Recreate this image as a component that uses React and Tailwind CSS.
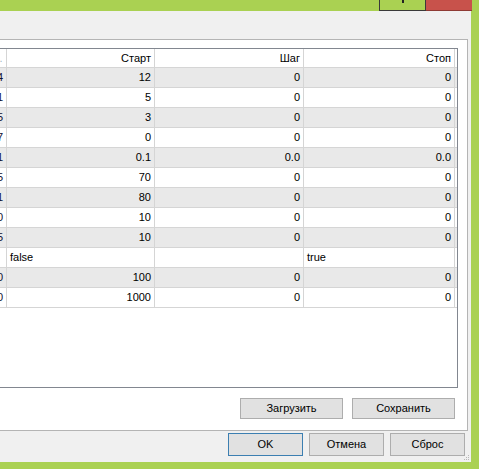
import React from "react";

// rows of the parameter grid; first column is scrolled off to the left
const ROWS = [
  ["4", "12", "0", "0"],
  ["1", "5", "0", "0"],
  ["5", "3", "0", "0"],
  ["7", "0", "0", "0"],
  ["1", "0.1", "0.0", "0.0"],
  ["5", "70", "0", "0"],
  ["1", "80", "0", "0"],
  ["0", "10", "0", "0"],
  ["5", "10", "0", "0"],
  ["", "false", "", "true"],
  ["0", "100", "0", "0"],
  ["0", "1000", "0", "0"],
];

const COLS = ["w-[17px]", "w-[148px]", "w-[149px]", "w-[151px]"];

function Cell({ w, left, children }) {
  return (
    <div
      className={`${w} h-full shrink-0 flex items-center border-r border-[#d5d5d5] ${
        left ? "justify-start pl-[3px]" : "justify-end pr-[3px]"
      }`}
    >
      {children}
    </div>
  );
}

function Btn({ w, h, def, children }) {
  return (
    <button
      className={`${w} ${h} bg-[#e1e1e1] border ${
        def ? "border-[#3c7fb1]" : "border-[#adadad]"
      } text-black flex items-center justify-center`}
    >
      {children}
    </button>
  );
}

export default function App() {
  return (
    <div
      className="w-[479px] h-[469px] bg-[#aad152] flex flex-col overflow-hidden text-[11px] text-black"
      style={{ fontFamily: '"Liberation Sans", Arial, sans-serif' }}
    >
      {/* title bar */}
      <div className="h-[11px] shrink-0 flex justify-end pr-[7px]">
        <div className="w-[47px] h-[11px] border border-t-0 border-[#3a3a3a] bg-[#aad152] flex justify-center">
          <div className="w-[2px] h-[3px] bg-[#222]" />
        </div>
        <div className="w-[46px] h-[11px] bg-[#c8524b] border-b border-[#8e3a34]" />
      </div>

      <div className="flex flex-1">
        <div className="relative w-[471px] h-[451px] bg-[#f0f0f0] flex flex-col">
          {/* tab page */}
          <div className="mt-[28px] -ml-[20px] mr-[3px] border border-[#b4b4b4] bg-white pt-[8px] pr-[9px] pl-[8px] pb-[11px] flex flex-col">
            <div className="h-[340px] border border-[#828790] bg-white flex flex-col">
              <div className="h-[19px] flex border-b border-[#d5d5d5] bg-white">
                <Cell w={COLS[0]}>
                  <span className="text-[#9fb7c4]">…</span>
                </Cell>
                <Cell w={COLS[1]}>Старт</Cell>
                <Cell w={COLS[2]}>Шаг</Cell>
                <Cell w={COLS[3]}>Стоп</Cell>
              </div>
              {ROWS.map((r, i) => {
                const isText = r[1] === "false";
                return (
                  <div
                    key={i}
                    className={`h-[20px] flex border-b border-[#d5d5d5] ${
                      i % 2 === 0 ? "bg-[#e9e9e9]" : "bg-white"
                    }`}
                  >
                    <Cell w={COLS[0]}>
                      <span className="text-[#101030]">{r[0]}</span>
                    </Cell>
                    <Cell w={COLS[1]} left={isText}>{r[1]}</Cell>
                    <Cell w={COLS[2]} left={isText}>{r[2]}</Cell>
                    <Cell w={COLS[3]} left={isText}>{r[3]}</Cell>
                  </div>
                );
              })}
            </div>
            <div className="mt-[10px] flex justify-end gap-[9px] pr-[3px]">
              <Btn w="w-[103px]" h="h-[21px]">Загрузить</Btn>
              <Btn w="w-[103px]" h="h-[21px]">Сохранить</Btn>
            </div>
          </div>

          <div className="mt-[2px] flex justify-end gap-[6px] pr-[6px]">
            <Btn w="w-[75px]" h="h-[23px]" def>OK</Btn>
            <Btn w="w-[75px]" h="h-[23px]">Отмена</Btn>
            <Btn w="w-[75px]" h="h-[23px]">Сброс</Btn>
          </div>

          {/* size grip */}
          <div className="absolute right-[2px] bottom-[2px] grid grid-cols-3 gap-[1px]">
            {[0, 0, 1, 0, 1, 1, 1, 1, 1].map((v, i) => (
              <div key={i} className={`w-[1px] h-[1px] ${v ? "bg-[#b8b8b8]" : ""}`} />
            ))}
          </div>
        </div>
      </div>
      <div className="h-[7px] shrink-0" />
    </div>
  );
}
